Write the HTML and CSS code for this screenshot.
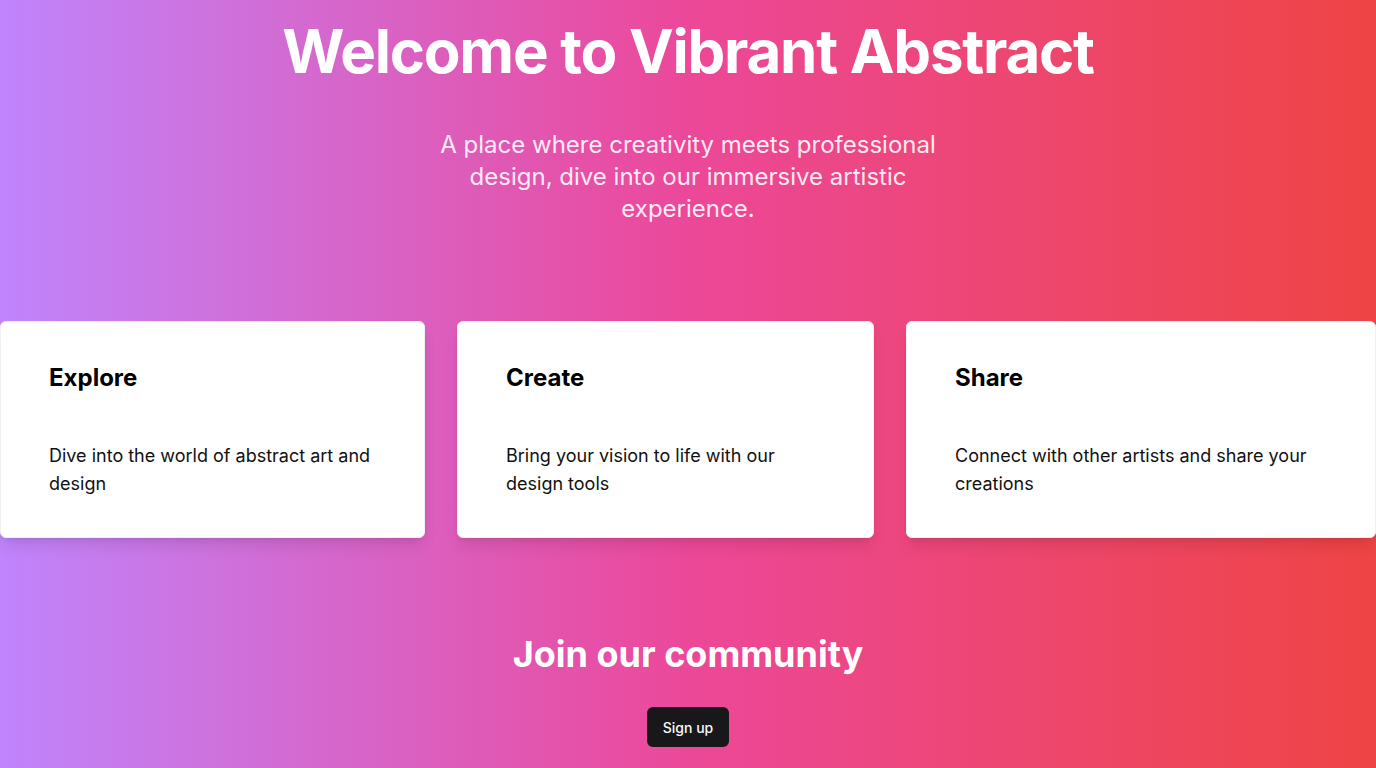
FILE: index.html
```html
<!DOCTYPE html>
<html lang="en">
<head>
<meta charset="utf-8">
<title>Vibrant Abstract</title>
<link rel="stylesheet" href="styles.css">
</head>
<body>
<main class="page">
  <h1 class="title">Welcome to Vibrant Abstract</h1>
  <p class="subtitle">A place where creativity meets professional design, dive into our immersive artistic experience.</p>
  <section class="cards">
    <article class="card">
      <h2 class="card-title">Explore</h2>
      <p class="card-text">Dive into the world of abstract art and design</p>
    </article>
    <article class="card">
      <h2 class="card-title">Create</h2>
      <p class="card-text">Bring your vision to life with our design tools</p>
    </article>
    <article class="card">
      <h2 class="card-title">Share</h2>
      <p class="card-text">Connect with other artists and share your creations</p>
    </article>
  </section>
  <section class="join">
    <h2 class="join-title">Join our community</h2>
    <button class="btn">Sign up</button>
  </section>
</main>
</body>
</html>
```
FILE: styles.css
```css
* { box-sizing: border-box; }
html, body { margin: 0; padding: 0; }
body {
  font-family: Inter, "Noto Sans", sans-serif;
  min-height: 100vh;
  background: linear-gradient(to right, #c084fc, #ec4899, #ef4444);
  color: #fff;
}
.page {
  display: flex;
  flex-direction: column;
  align-items: center;
  padding: 21px 0 40px;
  text-align: center;
}
.title {
  margin: 0;
  font-size: 60px;
  line-height: 60px;
  font-weight: 700;
  letter-spacing: -1.25px;
}
.subtitle {
  margin: 48px 0 0;
  max-width: 512px;
  font-size: 24px;
  line-height: 32px;
  color: rgba(255, 255, 255, 0.9);
}
.cards {
  margin-top: 96px;
  width: 100%;
  display: grid;
  grid-template-columns: 425fr 417fr 470fr;
  gap: 32px;
  text-align: left;
}
.card {
  background: #fff;
  color: #000;
  border: 1px solid #f1f1f4;
  border-radius: 6px;
  padding: 40px 48px 39px;
  box-shadow: 0 10px 15px -3px rgba(0,0,0,0.1), 0 4px 6px -4px rgba(0,0,0,0.1);
}
.card-title {
  margin: 0;
  font-size: 24px;
  line-height: 32px;
  font-weight: 700;
}
.card-text {
  margin: 48px 0 0;
  font-size: 18px;
  line-height: 28px;
  color: #111;
}
.join {
  margin-top: 96px;
  display: flex;
  flex-direction: column;
  align-items: center;
}
.join-title {
  margin: 0;
  font-size: 36px;
  line-height: 40px;
  font-weight: 700;
}
.btn {
  margin-top: 33px;
  height: 40px;
  padding: 0 16px;
  border: 0;
  border-radius: 6px;
  background: #18181b;
  color: #fafafa;
  font-family: Inter, sans-serif;
  font-size: 14px;
  font-weight: 500;
}
```
